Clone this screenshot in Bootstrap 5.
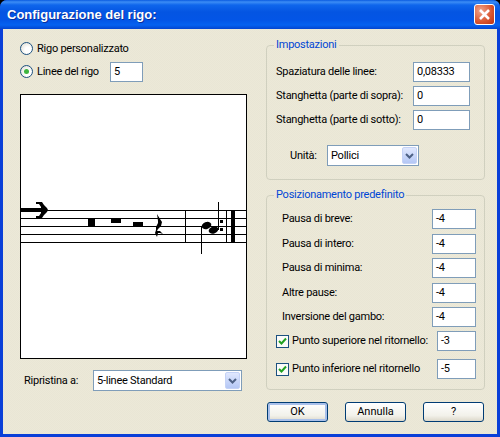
<!DOCTYPE html>
<html lang="it"><head><meta charset="utf-8"><title>Configurazione del rigo</title>
<link href="https://cdn.jsdelivr.net/npm/bootstrap@5.3.0/dist/css/bootstrap.min.css" rel="stylesheet">
<style>
html,body{margin:0;background:#000;overflow:hidden}
body{font-family:Roboto,"Liberation Sans",sans-serif;font-size:11px;line-height:14px;letter-spacing:-.25px;color:#000}
.xpwin{width:500px;height:437px;background:#0a3fd8;border-radius:7px 7px 0 0;overflow:hidden}
.xptitle{height:29px;padding:0 5px 0 7px;background:linear-gradient(180deg,#0a5be0 0,#3c8df5 2px,#0f66ec 5px,#0455e2 12px,#0355e6 20px,#0562f0 25px,#0345d0 29px)}
.xptitletext{font-family:"Liberation Sans",sans-serif;font-weight:700;font-size:13px;letter-spacing:0;color:#fff;text-shadow:1px 1px 0 #0a2f9c}
.xpclose{width:21px;height:21px;border:1px solid #fff;border-radius:3px;background:radial-gradient(circle at 30% 30%,#f0a48c,#d8542e 60%,#b83214);padding:0}
.xpbody{height:405px;margin:0 3px 3px;background-color:#ece9d8;background-image:repeating-conic-gradient(#ece9d8 0 25%,#e9e6d5 0 50%);background-size:2px 2px;padding:8px 12px 0 17px;gap:19px}
.leftcol{width:227px;flex:none}
.rightcol{width:219px;flex:none;padding-top:1px}
.optrow{height:23px;gap:4px}
.xpradio{width:13px;height:13px;border-radius:50%;border:1px solid #1c5180;background:radial-gradient(circle at 65% 65%,#fff 30%,#dcd9cc);flex:none;padding:0}
.radiodot{width:5px;height:5px;border-radius:50%;background:#3fb53f}
.xpinput{height:20px;border:1px solid #7f9db9;background:#fff;padding:0 3px;line-height:17px;font-size:11px;color:#000;border-radius:0;outline:0}
.w33{width:33px;margin-left:7px}
.w57{width:57px}.w44{width:44px}.w39{width:39px}
.music{width:227px;height:265px;border:1px solid #000;background:#fff;margin-top:11px}
.music svg{display:block;width:225px;height:263px}
.combo{height:21px;border:1px solid #7f9db9;background:#fff;padding:1px 1px 1px 3px}
.combobtn{width:15px;height:17px;border-radius:2px;background:linear-gradient(180deg,#e0e8fe,#b4c7f5);border:1px solid #c4d2f6}
.restrow{padding:11px 5px 0 4px}
.c149{width:149px}.c92{width:92px}
.xpgroup{border:1px solid #d0d0bf;border-radius:4px;padding:0;margin:0}
.xplegend{float:none;width:auto;font-size:11px;line-height:14px;color:#0046d5;margin:0 0 0 -2px;padding:0 2px}
.grp1{height:142px;padding:0 14px 0 9px}
.grp2{height:202px;padding:0 8px 0 9px;margin-top:8px}
.stack1{padding-top:10px;gap:4px}
.stack2{padding-top:7px;gap:4.5px}
.rw{height:20px}
.lbl2{padding-left:6px}
.chkrow1{margin-top:-.5px}
.chkrow2{margin-top:3.5px}
.unitrow{margin-top:11px;padding-left:14px}
.unitlbl{width:37px}
.xpcheck{width:13px;height:13px;border:1px solid #1c5180;background:#fbfbf8;flex:none}
.chkgap{gap:3px}
.btnrow{margin-top:12px;gap:17px;padding-left:1px}
.xpbtn{width:61px;height:20px;line-height:16px;font-size:11px;padding:0;color:#000;border:1px solid #003c74;border-radius:3px;background:linear-gradient(180deg,#fff,#f2f1ea 70%,#dcd8ca)}
.xpbtn:hover{color:#000;border-color:#003c74;background:#f2f1ea}
.xpdefault{box-shadow:inset 0 0 0 2px #a9c0ea}
</style></head>
<body>
<div class="xpwin">
  <div class="xptitle d-flex align-items-center justify-content-between">
    <span class="xptitletext">Configurazione del rigo:</span>
    <button class="xpclose d-flex align-items-center justify-content-center" aria-label="Chiudi"><svg width="13" height="13" viewBox="0 0 13 13"><path d="M2 2l9 9M11 2l-9 9" stroke="#fff" stroke-width="2.6" fill="none"/></svg></button>
  </div>
  <div class="xpbody d-flex">
    <div class="leftcol">
      <div class="optrow d-flex align-items-center"><span class="xpradio"></span><span>Rigo personalizzato</span></div>
      <div class="optrow d-flex align-items-center"><span class="xpradio d-flex align-items-center justify-content-center"><span class="radiodot"></span></span><span>Linee del rigo</span><span class="xpinput w33 d-block">5</span></div>
      <div class="music">
        <svg viewBox="21 95 225 263" shape-rendering="crispEdges">
          <g fill="#000">
            <rect x="21" y="210" width="225" height="1"/><rect x="21" y="218" width="225" height="1"/><rect x="21" y="226" width="225" height="1"/><rect x="21" y="234" width="225" height="1"/><rect x="21" y="242" width="225" height="1"/>
            <rect x="21" y="208" width="20" height="4"/>
            <path d="M36 202h6l2 3 3 3 1 2-1 2-3 3-2 3h-6v-2h3l2-3v-6l-2-3h-3z" shape-rendering="auto"/>
            <rect x="88" y="218" width="7" height="8"/><rect x="111" y="218" width="10" height="5"/><rect x="133" y="222" width="10" height="4"/>
            <path d="M157 214l3 5 2 3-1 4-3 3-1 2h3l3 3-3-1h-2l-1 4-2-4 1-3v-3l2-4v-2z" shape-rendering="auto"/>
            <rect x="185" y="210" width="1" height="33"/>
            <rect x="201" y="226" width="1" height="28"/>
            <ellipse cx="206.5" cy="225.5" rx="5" ry="3.5" transform="rotate(-22 206.5 225.5)" shape-rendering="auto"/>
            <ellipse cx="213.5" cy="230" rx="5" ry="3.5" transform="rotate(-22 213.5 230)" shape-rendering="auto"/>
            <rect x="218" y="202" width="1" height="28"/>
            <rect x="220" y="220" width="3" height="3"/><rect x="220" y="228" width="3" height="3"/>
            <rect x="226" y="210" width="1" height="33"/><rect x="231" y="210" width="4" height="33"/>
          </g>
        </svg>
      </div>
      <div class="restrow d-flex align-items-center justify-content-between">
        <span>Ripristina a:</span>
        <div class="combo c149 d-flex align-items-center justify-content-between"><span>5-linee Standard</span><span class="combobtn d-flex align-items-center justify-content-center"><svg width="9" height="6" viewBox="0 0 9 6"><path d="M1 1l3.5 3.5L8 1" stroke="#4d6185" stroke-width="2" fill="none"/></svg></span></div>
      </div>
    </div>
    <div class="rightcol">
      <fieldset class="xpgroup grp1">
        <legend class="xplegend">Impostazioni</legend>
        <div class="stack1 d-flex flex-column">
          <div class="rw d-flex align-items-center justify-content-between"><span>Spaziatura delle linee:</span><span class="xpinput w57">0,08333</span></div>
          <div class="rw d-flex align-items-center justify-content-between"><span>Stanghetta (parte di sopra):</span><span class="xpinput w57">0</span></div>
          <div class="rw d-flex align-items-center justify-content-between"><span>Stanghetta (parte di sotto):</span><span class="xpinput w57">0</span></div>
          <div class="unitrow d-flex align-items-center"><span class="unitlbl">Unità:</span><div class="combo c92 d-flex align-items-center justify-content-between"><span>Pollici</span><span class="combobtn d-flex align-items-center justify-content-center"><svg width="9" height="6" viewBox="0 0 9 6"><path d="M1 1l3.5 3.5L8 1" stroke="#4d6185" stroke-width="2" fill="none"/></svg></span></div></div>
        </div>
      </fieldset>
      <fieldset class="xpgroup grp2">
        <legend class="xplegend">Posizionamento predefinito</legend>
        <div class="stack2 d-flex flex-column">
          <div class="rw lbl2 d-flex align-items-center justify-content-between"><span>Pausa di breve:</span><span class="xpinput w44">-4</span></div>
          <div class="rw lbl2 d-flex align-items-center justify-content-between"><span>Pausa di intero:</span><span class="xpinput w44">-4</span></div>
          <div class="rw lbl2 d-flex align-items-center justify-content-between"><span>Pausa di minima:</span><span class="xpinput w44">-4</span></div>
          <div class="rw lbl2 d-flex align-items-center justify-content-between"><span>Altre pause:</span><span class="xpinput w44">-4</span></div>
          <div class="rw lbl2 d-flex align-items-center justify-content-between"><span>Inversione del gambo:</span><span class="xpinput w44">-4</span></div>
          <div class="rw chkrow1 d-flex align-items-center justify-content-between"><span class="d-flex align-items-center chkgap"><span class="xpcheck d-flex align-items-center justify-content-center"><svg width="9" height="9" viewBox="0 0 9 9"><path d="M1 4l2.5 2.5L8 1.5" stroke="#21a121" stroke-width="2" fill="none"/></svg></span><span>Punto superiore nel ritornello:</span></span><span class="xpinput w39">-3</span></div>
          <div class="rw chkrow2 d-flex align-items-center justify-content-between"><span class="d-flex align-items-center chkgap"><span class="xpcheck d-flex align-items-center justify-content-center"><svg width="9" height="9" viewBox="0 0 9 9"><path d="M1 4l2.5 2.5L8 1.5" stroke="#21a121" stroke-width="2" fill="none"/></svg></span><span>Punto inferiore nel ritornello</span></span><span class="xpinput w39">-5</span></div>
        </div>
      </fieldset>
      <div class="btnrow d-flex">
        <button class="btn xpbtn xpdefault">OK</button><button class="btn xpbtn">Annulla</button><button class="btn xpbtn">?</button>
      </div>
    </div>
  </div>
</div>
</body></html>
